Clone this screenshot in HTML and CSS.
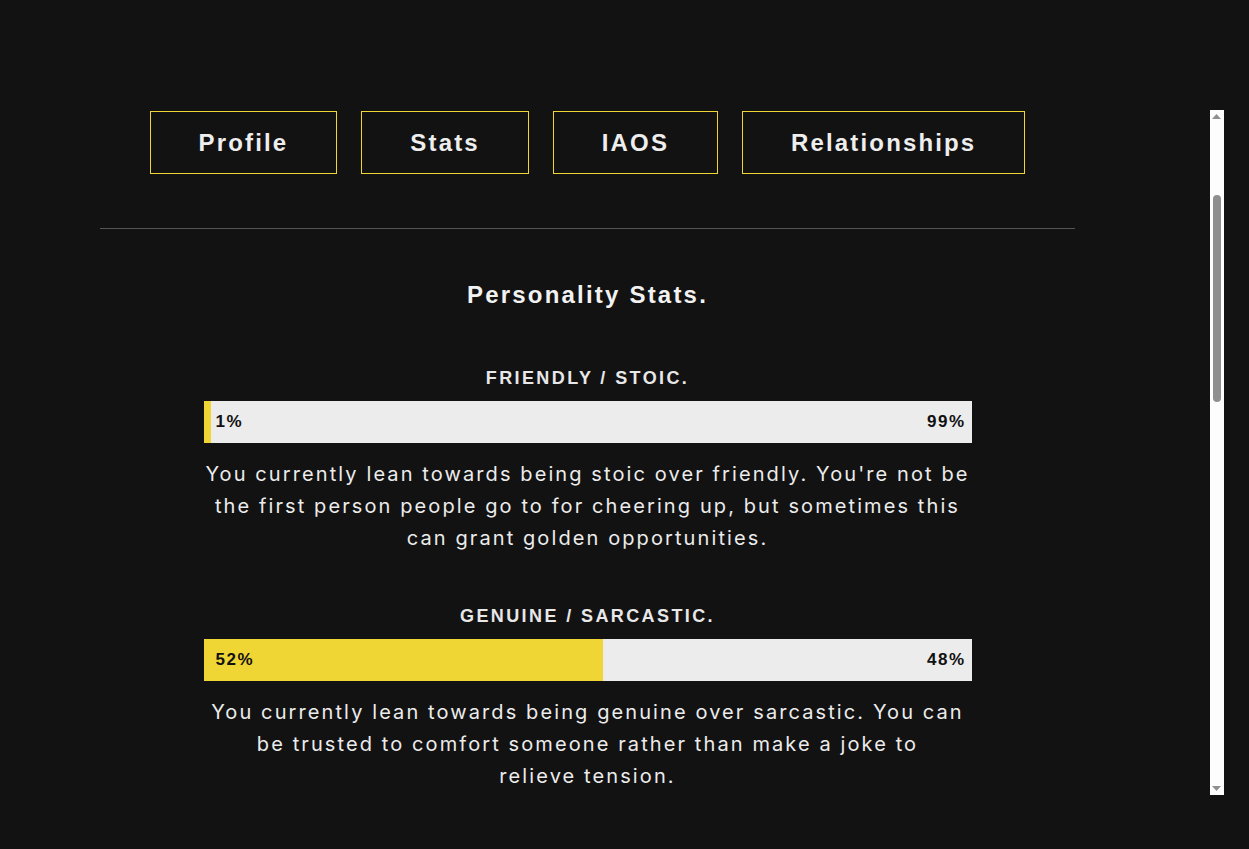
FILE: index.html
```html
<!DOCTYPE html>
<html lang="en">
<head>
<meta charset="utf-8">
<title>Personality Stats</title>
<link rel="stylesheet" href="styles.css">
</head>
<body>
<div class="panel">
  <div class="viewport" id="viewport">
    <header class="tabs-header" id="tabs-header">
      <nav class="tabs">
        <a class="tab" href="#profile">Profile</a>
        <a class="tab" href="#stats">Stats</a>
        <a class="tab" href="#iaos">IAOS</a>
        <a class="tab" href="#relationships">Relationships</a>
      </nav>
      <hr class="divider">
    </header>

    <section class="section profile" id="profile">
      <h2 class="section-title">Profile.</h2>
      <p class="stat-text">A quick overview of who this character is, where they come from and what drives them from one day to the next.</p>
    </section>

    <section class="section stats" id="stats">
      <h2 class="section-title">Personality Stats.</h2>
      <div class="stat-list">
        <div class="stat">
          <h3 class="stat-label">FRIENDLY / STOIC.</h3>
          <div class="bar">
            <div class="bar-fill" style="width:1%"></div>
            <div class="bar-values"><span>1%</span><span>99%</span></div>
          </div>
          <p class="stat-text">You currently lean towards being stoic over friendly. You're not be the first person people go to for cheering up, but sometimes this can grant golden opportunities.</p>
        </div>
        <div class="stat">
          <h3 class="stat-label">GENUINE / SARCASTIC.</h3>
          <div class="bar">
            <div class="bar-fill" style="width:52%"></div>
            <div class="bar-values"><span>52%</span><span>48%</span></div>
          </div>
          <p class="stat-text">You currently lean towards being genuine over sarcastic. You can be trusted to comfort someone rather than make a joke to relieve&nbsp;tension.</p>
        </div>
        <div class="stat">
          <h3 class="stat-label">SERIOUS / PLAYFUL.</h3>
          <div class="bar">
            <div class="bar-fill" style="width:35%"></div>
            <div class="bar-values"><span>35%</span><span>65%</span></div>
          </div>
          <p class="stat-text">You currently lean towards being playful over serious. You bring a lightness to most situations, though some may wish you took things a little more to&nbsp;heart.</p>
        </div>
        <div class="stat">
          <h3 class="stat-label">PATIENT / IMPULSIVE.</h3>
          <div class="bar">
            <div class="bar-fill" style="width:60%"></div>
            <div class="bar-values"><span>60%</span><span>40%</span></div>
          </div>
          <p class="stat-text">You currently lean towards being patient over impulsive. You prefer to wait for the right moment, even if it means letting a few chances slip past&nbsp;you.</p>
        </div>
        <div class="stat">
          <h3 class="stat-label">OPTIMISTIC / PESSIMISTIC.</h3>
          <div class="bar">
            <div class="bar-fill" style="width:44%"></div>
            <div class="bar-values"><span>44%</span><span>56%</span></div>
          </div>
          <p class="stat-text">You currently lean towards being pessimistic over optimistic. You expect the worst so you are rarely caught off guard, and pleasantly surprised when things go&nbsp;well.</p>
        </div>
        <div class="stat">
          <h3 class="stat-label">LOGICAL / EMOTIONAL.</h3>
          <div class="bar">
            <div class="bar-fill" style="width:71%"></div>
            <div class="bar-values"><span>71%</span><span>29%</span></div>
          </div>
          <p class="stat-text">You currently lean towards being logical over emotional. You weigh every option carefully before acting, which keeps you steady when others start to&nbsp;panic.</p>
        </div>
        <div class="stat">
          <h3 class="stat-label">CAUTIOUS / DARING.</h3>
          <div class="bar">
            <div class="bar-fill" style="width:23%"></div>
            <div class="bar-values"><span>23%</span><span>77%</span></div>
          </div>
          <p class="stat-text">You currently lean towards being daring over cautious. You are the first to volunteer for something risky, and the stories you bring back are usually worth&nbsp;it.</p>
        </div>
      </div>
    </section>
  </div>

  <div class="scrollbar" aria-hidden="true">
    <div class="sb-button">
      <svg width="14" height="14" viewBox="0 0 14 14"><path d="M2 9 L6.5 4 L11 9 Z" fill="#8f8f8f"/></svg>
    </div>
    <div class="sb-track" id="sb-track">
      <div class="sb-thumb" id="sb-thumb"></div>
    </div>
    <div class="sb-button">
      <svg width="14" height="14" viewBox="0 0 14 14"><path d="M2 5 L11 5 L6.5 10 Z" fill="#8f8f8f"/></svg>
    </div>
  </div>
</div>
<script src="script.js"></script>
</body>
</html>
```

FILE: styles.css
```css
html, body {
  margin: 0;
  padding: 0;
  background: #121212;
}

body {
  font-family: "Liberation Sans", Arial, sans-serif;
  color: #ececec;
}

.panel {
  display: flex;
  margin: 110px 25px 0 100px;
  height: 685px;
}

.viewport {
  position: relative;
  flex: 1;
  min-width: 0;
  overflow: hidden;
}

/* scrollbar */
.scrollbar {
  width: 14px;
  display: flex;
  flex-direction: column;
  background: #fdfdfd;
}

.sb-button {
  height: 14px;
  flex: none;
}

.sb-button svg {
  display: block;
}

.sb-track {
  flex: 1;
  min-height: 0;
}

.sb-thumb {
  width: 8px;
  margin-left: 3px;
  margin-top: 70px;
  height: 206px;
  border-radius: 4px;
  background: #8f8f8f;
}

/* header */
.tabs-header {
  position: sticky;
  top: 0;
  z-index: 1;
  width: 975px;
  padding-top: 1px;
  background: #121212;
}

.tabs {
  display: flex;
  justify-content: center;
  gap: 24px;
}

.tab {
  display: block;
  padding: 16px 48px;
  border: 1px solid #f0d634;
  font: 700 24px/29px "Liberation Sans", Arial, sans-serif;
  letter-spacing: 2.15px;
  color: #eeeeee;
  text-decoration: none;
}

.divider {
  margin: 54px 0 0;
  height: 0;
  border: 0;
  border-top: 1px solid #555555;
}

/* sections */
.section {
  width: 975px;
}

.profile {
  padding: 8px 0 119px;
}

.stats {
  padding: 52px 0 72px;
}

.section-title {
  margin: 0;
  text-align: center;
  font: 700 24px/28px "Liberation Sans", Arial, sans-serif;
  letter-spacing: 2.2px;
  color: #f2f2f2;
}

.stat-list {
  width: 768px;
  margin: 58px auto 0;
  display: flex;
  flex-direction: column;
  gap: 51px;
}

.stat-label {
  margin: 0;
  text-align: center;
  font: 700 18px/22px "Liberation Sans", Arial, sans-serif;
  letter-spacing: 2.4px;
  color: #e8e8e8;
}

.bar {
  margin-top: 12px;
  height: 42px;
  display: grid;
  background: #ececec;
}

.bar-fill,
.bar-values {
  grid-area: 1 / 1;
}

.bar-fill {
  height: 100%;
  background: #f0d634;
}

.bar-values {
  display: flex;
  align-items: center;
  justify-content: space-between;
  padding: 0 6px 0 12px;
  font: 700 17px/20px "Liberation Sans", Arial, sans-serif;
  letter-spacing: 1.5px;
  color: #111111;
}

.stat-text {
  margin: 15px 0 0;
  text-align: center;
  font: 400 20px/32px Inter, Lato, sans-serif;
  letter-spacing: 2.1px;
  color: #ececec;
}
```

FILE: script.js
```js
var viewport = document.getElementById('viewport');
var stats = document.getElementById('stats');
var header = document.getElementById('tabs-header');
var track = document.getElementById('sb-track');
var thumb = document.getElementById('sb-thumb');

viewport.scrollTop = stats.offsetTop - header.offsetHeight;

var trackLen = track.clientHeight;
var thumbLen = Math.round(trackLen * viewport.clientHeight / viewport.scrollHeight);
var maxScroll = viewport.scrollHeight - viewport.clientHeight;
var offset = maxScroll > 0 ? Math.round(viewport.scrollTop / maxScroll * (trackLen - thumbLen)) : 0;
thumb.style.height = thumbLen + 'px';
thumb.style.marginTop = offset + 'px';
```
